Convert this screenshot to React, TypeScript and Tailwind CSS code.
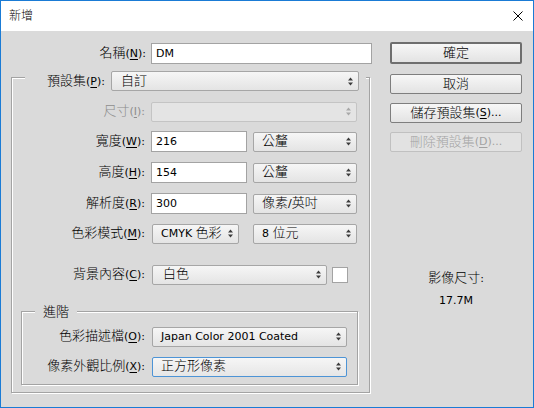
import React from "react";

const CJK_RE = /([\u2e80-\u9fff\uff00-\uffef]+)/;

// Latin runs use the base 11px face; CJK runs are set a bit larger and lighter.
function T({ s }: { s: string }) {
  const parts = s.split(CJK_RE);
  return (
    <>
      {parts.map((p, i) =>
        CJK_RE.test(p) ? (
          <span key={i} className="text-[13px] font-light">
            {p}
          </span>
        ) : (
          <span key={i}>{p}</span>
        )
      )}
    </>
  );
}

function Label({
  text,
  mn,
  w,
  disabled,
  tail = "):",
}: {
  text: string;
  mn: string;
  w: string;
  disabled?: boolean;
  tail?: string;
}) {
  return (
    <div
      className={`${w} shrink-0 text-right whitespace-nowrap leading-[16px] ${
        disabled ? "text-[#8d8d8d]" : "text-black"
      }`}
    >
      <span className="text-[13px] font-light">{text}</span>(
      <span className="underline underline-offset-2">{mn}</span>
      {tail}
    </div>
  );
}

function Arrows({ color = "#3c3c3c" }: { color?: string }) {
  return (
    <svg width="5" height="9" viewBox="0 0 5 9" className="shrink-0">
      <polygon points="0,3.5 2.5,0.5 5,3.5" fill={color} />
      <polygon points="0,5.5 2.5,8.5 5,5.5" fill={color} />
    </svg>
  );
}

function Select({
  w,
  value,
  disabled,
  focused,
  pl = "pl-[8px]",
}: {
  w: string;
  value?: string;
  disabled?: boolean;
  focused?: boolean;
  pl?: string;
}) {
  const skin = disabled
    ? "bg-[#e4e4e4] border-[#c4c4c4]"
    : focused
    ? "bg-linear-to-b from-[#f6f6f6] to-[#e6e6e6] border-[#4d94d6]"
    : "bg-linear-to-b from-[#f6f6f6] to-[#e4e4e4] border-[#a6a6a6]";
  return (
    <div
      className={`${w} h-[20px] shrink-0 rounded-[2px] border ${skin} flex items-center justify-between ${pl} pr-[5px]`}
    >
      <span className="leading-[16px] whitespace-nowrap text-black">
        {value ? <T s={value} /> : null}
      </span>
      <Arrows color={disabled ? "#a8a8a8" : "#3c3c3c"} />
    </div>
  );
}

function TextBox({ w, value }: { w: string; value: string }) {
  return (
    <div
      className={`${w} h-[21px] shrink-0 bg-white border border-[#a3a3a3] flex items-center pl-[4px] leading-[16px] text-black`}
    >
      {value}
    </div>
  );
}

function Button({
  children,
  h = "h-[20px]",
  primary,
  disabled,
  mt,
}: {
  children: React.ReactNode;
  h?: string;
  primary?: boolean;
  disabled?: boolean;
  mt: string;
}) {
  const skin = disabled
    ? "border border-[#c0c0c0] bg-[#e2e2e2] text-[#a2a2a2]"
    : primary
    ? "border-2 border-[#6e6e6e] bg-linear-to-b from-[#f7f7f7] to-[#e3e3e3] text-black"
    : "border border-[#7e7e7e] bg-linear-to-b from-[#f7f7f7] to-[#e3e3e3] text-black";
  return (
    <div
      className={`${mt} ${h} w-[132px] ${skin} rounded-[2px] flex items-center justify-center leading-[16px] whitespace-nowrap`}
    >
      {children}
    </div>
  );
}

export default function App() {
  return (
    <div className="w-[534px] h-[408px] border border-[#1a7bd5] bg-[#dadada] flex flex-col text-[11px] font-['DejaVu_Sans','Noto_Sans_CJK_TC',sans-serif] select-none">
      {/* title bar */}
      <div className="h-[30px] shrink-0 bg-white flex items-center justify-between pl-[8px]">
        <span className="text-[12px] font-light leading-[16px] text-black">新增</span>
        <svg width="10" height="10" viewBox="0 0 10 10" className="mr-[10px]">
          <path d="M0.5 0.5 L9.5 9.5 M9.5 0.5 L0.5 9.5" stroke="#000" strokeWidth="1" />
        </svg>
      </div>

      {/* body */}
      <div className="flex flex-1">
        {/* left column */}
        <div className="w-[371px] shrink-0 pt-[12px]">
          <div className="flex h-[21px] items-center">
            <Label text="名稱" mn="N" w="w-[145px]" />
            <div className="ml-[5px]">
              <TextBox w="w-[221px]" value="DM" />
            </div>
          </div>

          {/* preset group */}
          <div className="mt-[13px] ml-[10px] w-[359px] border border-[#a3a3a3] shadow-[inset_1px_1px_0_#fff,1px_1px_0_#fff] pb-[7px]">
            <div className="-mt-[7px] ml-[13px] w-[341px] h-[20px] bg-[#dadada] flex items-center">
              <Label text="預設集" mn="P" w="w-[80px]" />
              <div className="ml-[6px]">
                <Select w="w-[248px]" value="自訂" pl="pl-[9px]" />
              </div>
            </div>

            <div className="mt-[10px] flex h-[21px] items-center">
              <Label text="尺寸" mn="I" w="w-[133px]" disabled />
              <div className="ml-[6px]">
                <Select w="w-[206px]" disabled />
              </div>
            </div>

            <div className="mt-[9px] flex h-[21px] items-center">
              <Label text="寬度" mn="W" w="w-[133px]" />
              <div className="ml-[6px] flex items-center gap-[6px]">
                <TextBox w="w-[96px]" value="216" />
                <Select w="w-[104px]" value="公釐" />
              </div>
            </div>

            <div className="mt-[10px] flex h-[21px] items-center">
              <Label text="高度" mn="H" w="w-[133px]" />
              <div className="ml-[6px] flex items-center gap-[6px]">
                <TextBox w="w-[96px]" value="154" />
                <Select w="w-[104px]" value="公釐" />
              </div>
            </div>

            <div className="mt-[10px] flex h-[21px] items-center">
              <Label text="解析度" mn="R" w="w-[133px]" />
              <div className="ml-[6px] flex items-center gap-[6px]">
                <TextBox w="w-[96px]" value="300" />
                <Select w="w-[104px]" value="像素/英吋" />
              </div>
            </div>

            <div className="mt-[9px] flex h-[21px] items-center">
              <Label text="色彩模式" mn="M" w="w-[133px]" />
              <div className="ml-[7px] flex items-center gap-[14px]">
                <Select w="w-[87px]" value="CMYK 色彩" />
                <Select w="w-[104px]" value="8 位元" />
              </div>
            </div>

            <div className="mt-[20px] flex h-[21px] items-center">
              <Label text="背景內容" mn="C" w="w-[133px]" />
              <div className="ml-[7px] flex items-center gap-[5px]">
                <Select w="w-[175px]" value="白色" pl="pl-[10px]" />
                <div className="w-[16px] h-[16px] bg-white border border-[#a3a3a3]" />
              </div>
            </div>

            {/* advanced group */}
            <div className="mt-[26px] ml-[9px] w-[337px] border border-[#a3a3a3] shadow-[inset_1px_1px_0_#fff,1px_1px_0_#fff] pb-[7px]">
              <div className="-mt-[8px] ml-[13px] w-fit px-[8px] h-[16px] leading-[16px] bg-[#dadada] text-[13px] font-light text-black">
                進階
              </div>
              <div className="mt-[6px] flex h-[21px] items-center">
                <Label text="色彩描述檔" mn="O" w="w-[123px]" />
                <div className="ml-[7px]">
                  <Select w="w-[195px]" value="Japan Color 2001 Coated" />
                </div>
              </div>
              <div className="mt-[9px] flex h-[21px] items-center">
                <Label text="像素外觀比例" mn="X" w="w-[123px]" />
                <div className="ml-[7px]">
                  <Select w="w-[195px]" value="正方形像素" focused />
                </div>
              </div>
            </div>
          </div>
        </div>

        {/* right column */}
        <div className="ml-[18px] w-[132px] flex flex-col">
          <Button mt="mt-[11px]" h="h-[22px]" primary>
            <span className="text-[13px] font-light">確定</span>
          </Button>
          <Button mt="mt-[10px]">
            <span className="text-[13px] font-light">取消</span>
          </Button>
          <Button mt="mt-[9px]">
            <span className="text-[13px] font-light">儲存預設集</span>(
            <span className="underline underline-offset-2">S</span>)...
          </Button>
          <Button mt="mt-[9px]" disabled>
            <span className="text-[13px] font-light">刪除預設集</span>(
            <span className="underline underline-offset-2">D</span>)...
          </Button>
          <div className="mt-[118px] text-center leading-[16px] text-black">
            <span className="text-[13px] font-light">影像尺寸</span>:
          </div>
          <div className="mt-[6px] text-center leading-[16px] text-black">17.7M</div>
        </div>
      </div>
    </div>
  );
}
